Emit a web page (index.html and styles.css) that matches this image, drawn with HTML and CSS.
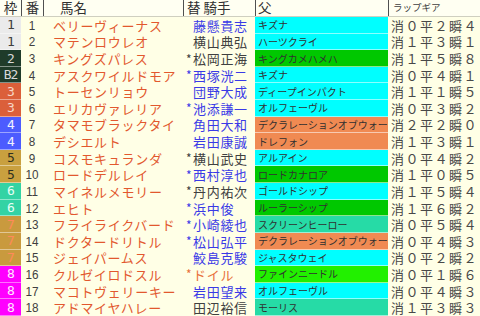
FILE: index.html
```html
<!DOCTYPE html>
<html lang="ja">
<head>
<meta charset="utf-8">
<link rel="stylesheet" href="styles.css">
</head>
<body>
<div class="sheet">
  <div class="row head">
    <div class="h c-waku">枠</div>
    <div class="h c-ban">番</div>
    <div class="h c-name">馬名</div>
    <div class="h c-jockey">替 騎手</div>
    <div class="h c-sire">父</div>
    <div class="h c-lap small">ラップギア</div>
  </div>

  <div class="row"><div class="waku w1">1</div><div class="ban">1</div><div class="name">ベリーヴィーナス</div><div class="jockey blue"><span class="ast"></span>藤懸貴志</div><div class="sire"><span class="sc cyan">キズナ</span></div><div class="lap">消０平２瞬４</div></div>
  <div class="row"><div class="waku w1">1</div><div class="ban">2</div><div class="name">マテンロウレオ</div><div class="jockey dark"><span class="ast"></span>横山典弘</div><div class="sire"><span class="sc cyan">ハーツクライ</span></div><div class="lap">消１平３瞬１</div></div>
  <div class="row"><div class="waku w2">2</div><div class="ban">3</div><div class="name">キングズパレス</div><div class="jockey dark"><span class="ast">*</span>松岡正海</div><div class="sire"><span class="sc green">キングカメハメハ</span></div><div class="lap">消１平５瞬８</div></div>
  <div class="row"><div class="waku w2">B2</div><div class="ban">4</div><div class="name">アスクワイルドモア</div><div class="jockey blue"><span class="ast">*</span>西塚洸二</div><div class="sire"><span class="sc cyan">キズナ</span></div><div class="lap">消０平４瞬１</div></div>
  <div class="row"><div class="waku w3">3</div><div class="ban">5</div><div class="name">トーセンリョウ</div><div class="jockey blue"><span class="ast"></span>団野大成</div><div class="sire"><span class="sc cyan">ディープインパクト</span></div><div class="lap">消１平１瞬５</div></div>
  <div class="row"><div class="waku w3">3</div><div class="ban">6</div><div class="name">エリカヴァレリア</div><div class="jockey blue"><span class="ast">*</span>池添謙一</div><div class="sire"><span class="sc cyan">オルフェーヴル</span></div><div class="lap">消０平３瞬２</div></div>
  <div class="row"><div class="waku w4">4</div><div class="ban">7</div><div class="name">タマモブラックタイ</div><div class="jockey blue"><span class="ast"></span>角田大和</div><div class="sire"><span class="sc orange">デクラレーションオブウォー</span></div><div class="lap">消２平２瞬０</div></div>
  <div class="row"><div class="waku w4">4</div><div class="ban">8</div><div class="name">デシエルト</div><div class="jockey blue"><span class="ast"></span>岩田康誠</div><div class="sire"><span class="sc orange">ドレフォン</span></div><div class="lap">消１平３瞬１</div></div>
  <div class="row"><div class="waku w5">5</div><div class="ban">9</div><div class="name">コスモキュランダ</div><div class="jockey dark"><span class="ast">*</span>横山武史</div><div class="sire"><span class="sc cyan">アルアイン</span></div><div class="lap">消０平４瞬２</div></div>
  <div class="row"><div class="waku w5">5</div><div class="ban">10</div><div class="name">ロードデルレイ</div><div class="jockey blue"><span class="ast">*</span>西村淳也</div><div class="sire"><span class="sc green">ロードカナロア</span></div><div class="lap">消１平０瞬５</div></div>
  <div class="row"><div class="waku w6">6</div><div class="ban">11</div><div class="name">マイネルメモリー</div><div class="jockey dark"><span class="ast">*</span>丹内祐次</div><div class="sire"><span class="sc cyan">ゴールドシップ</span></div><div class="lap">消１平５瞬４</div></div>
  <div class="row"><div class="waku w6">6</div><div class="ban">12</div><div class="name">エヒト</div><div class="jockey blue"><span class="ast">*</span>浜中俊</div><div class="sire"><span class="sc green">ルーラーシップ</span></div><div class="lap">消１平６瞬２</div></div>
  <div class="row"><div class="waku w7">7</div><div class="ban">13</div><div class="name">フライライクバード</div><div class="jockey blue"><span class="ast">*</span>小崎綾也</div><div class="sire"><span class="sc teal">スクリーンヒーロー</span></div><div class="lap">消０平５瞬４</div></div>
  <div class="row"><div class="waku w7">7</div><div class="ban">14</div><div class="name">ドクタードリトル</div><div class="jockey blue"><span class="ast">*</span>松山弘平</div><div class="sire"><span class="sc orange">デクラレーションオブウォー</span></div><div class="lap">消０平４瞬３</div></div>
  <div class="row"><div class="waku w7">7</div><div class="ban">15</div><div class="name">ジェイパームス</div><div class="jockey blue"><span class="ast"></span>鮫島克駿</div><div class="sire"><span class="sc cyan">ジャスタウェイ</span></div><div class="lap">消０平２瞬２</div></div>
  <div class="row"><div class="waku w8">8</div><div class="ban">16</div><div class="name">クルゼイロドスル</div><div class="jockey orangetx"><span class="ast">*</span>ドイル</div><div class="sire"><span class="sc lime">ファインニードル</span></div><div class="lap">消０平１瞬６</div></div>
  <div class="row"><div class="waku w8">8</div><div class="ban">17</div><div class="name">マコトヴェリーキー</div><div class="jockey blue"><span class="ast"></span>岩田望来</div><div class="sire"><span class="sc cyan">オルフェーヴル</span></div><div class="lap">消０平４瞬３</div></div>
  <div class="row"><div class="waku w8">8</div><div class="ban">18</div><div class="name">アドマイヤハレー</div><div class="jockey dark"><span class="ast"></span>田辺裕信</div><div class="sire"><span class="sc teal">モーリス</span></div><div class="lap">消１平３瞬３</div></div>
</div>
</body>
</html>
```

FILE: styles.css
```css
html, body {
  margin: 0;
  padding: 0;
  background: #ffffe6;
}

.sheet {
  width: 480px;
  height: 316px;
  display: flex;
  flex-direction: column;
  font-family: "Noto Sans CJK JP", "Noto Sans", sans-serif;
  color: #404040;
  overflow: hidden;
}

.row {
  flex: 1 1 0;
  min-height: 0;
  display: grid;
  grid-template-columns: 21px 22px 140px 72px 133px 92px;
  align-items: stretch;
}

.row.head {
  flex: 0 0 17px;
  border-bottom: 1px solid #cfcfc0;
  box-sizing: border-box;
  background: #fffff2;
}

.h {
  font-size: 13.5px;
  line-height: 1;
  color: #303030;
  white-space: nowrap;
  display: flex;
  align-items: center;
}

.h + .h {
  border-left: 1px solid #505050;
}

.h.c-waku, .h.c-ban { justify-content: center; }
.h.c-name { padding-left: 16px; }
.h.c-jockey { padding-left: 3px; }
.h.c-sire { padding-left: 2px; }
.h.c-lap { padding-left: 4px; }
.h.small { font-size: 9.5px; color: #404040; }

.waku, .ban, .name, .jockey, .lap {
  display: flex;
  align-items: center;
  white-space: nowrap;
  overflow: hidden;
  line-height: 1;
}

.waku {
  justify-content: center;
  font-size: 13px;
  border-bottom: 1px solid rgba(255, 255, 255, 0.45);
  font-family: "DejaVu Sans Mono", monospace;
  letter-spacing: -1px;
}

.w1 { background: #ebebeb; color: #404040; }
.w2 { background: #1f3b2a; color: #d8d8d8; }
.w3 { background: #db5f3a; color: #f6d6c8; }
.w4 { background: #4c5cff; color: #f0f0ff; }
.w5 { background: #c9a03f; color: #303020; }
.w6 { background: #33d3a4; color: #e8fff6; }
.w7 { background: #c99a3e; color: #ff8a5a; }
.w8 { background: #ff00ff; color: #ffe8ff; }

.ban {
  justify-content: center;
  font-size: 13px;
  color: #404040;
  font-family: "Liberation Sans", sans-serif;
  transform: scaleX(0.9);
}

.name {
  padding-left: 10px;
  font-size: 13px;
  letter-spacing: 0.7px;
  color: #e2582e;
}

.jockey {
  padding-left: 3px;
  font-size: 13px;
  letter-spacing: 0.7px;
}

.ast {
  display: inline-block;
  width: 7px;
  font-size: 12px;
}

.blue { color: #3a3ae6; }
.dark { color: #404040; }
.orangetx { color: #e8703a; }

.sire {
  display: flex;
  padding-right: 0;
}

.sc {
  flex: 1;
  display: flex;
  align-items: center;
  padding-left: 3px;
  font-size: 10px;
  color: #303030;
  white-space: nowrap;
  overflow: hidden;
  border-bottom: 1px solid rgba(255, 255, 255, 0.55);
}

.cyan { background: #00ffff; }
.green { background: #00c800; }
.lime { background: #22f000; }
.orange { background: #f08a52; }
.teal { background: #26dba6; }

.lap {
  padding-left: 3px;
  font-size: 13px;
  letter-spacing: 1.5px;
  color: #484848;
}
```
